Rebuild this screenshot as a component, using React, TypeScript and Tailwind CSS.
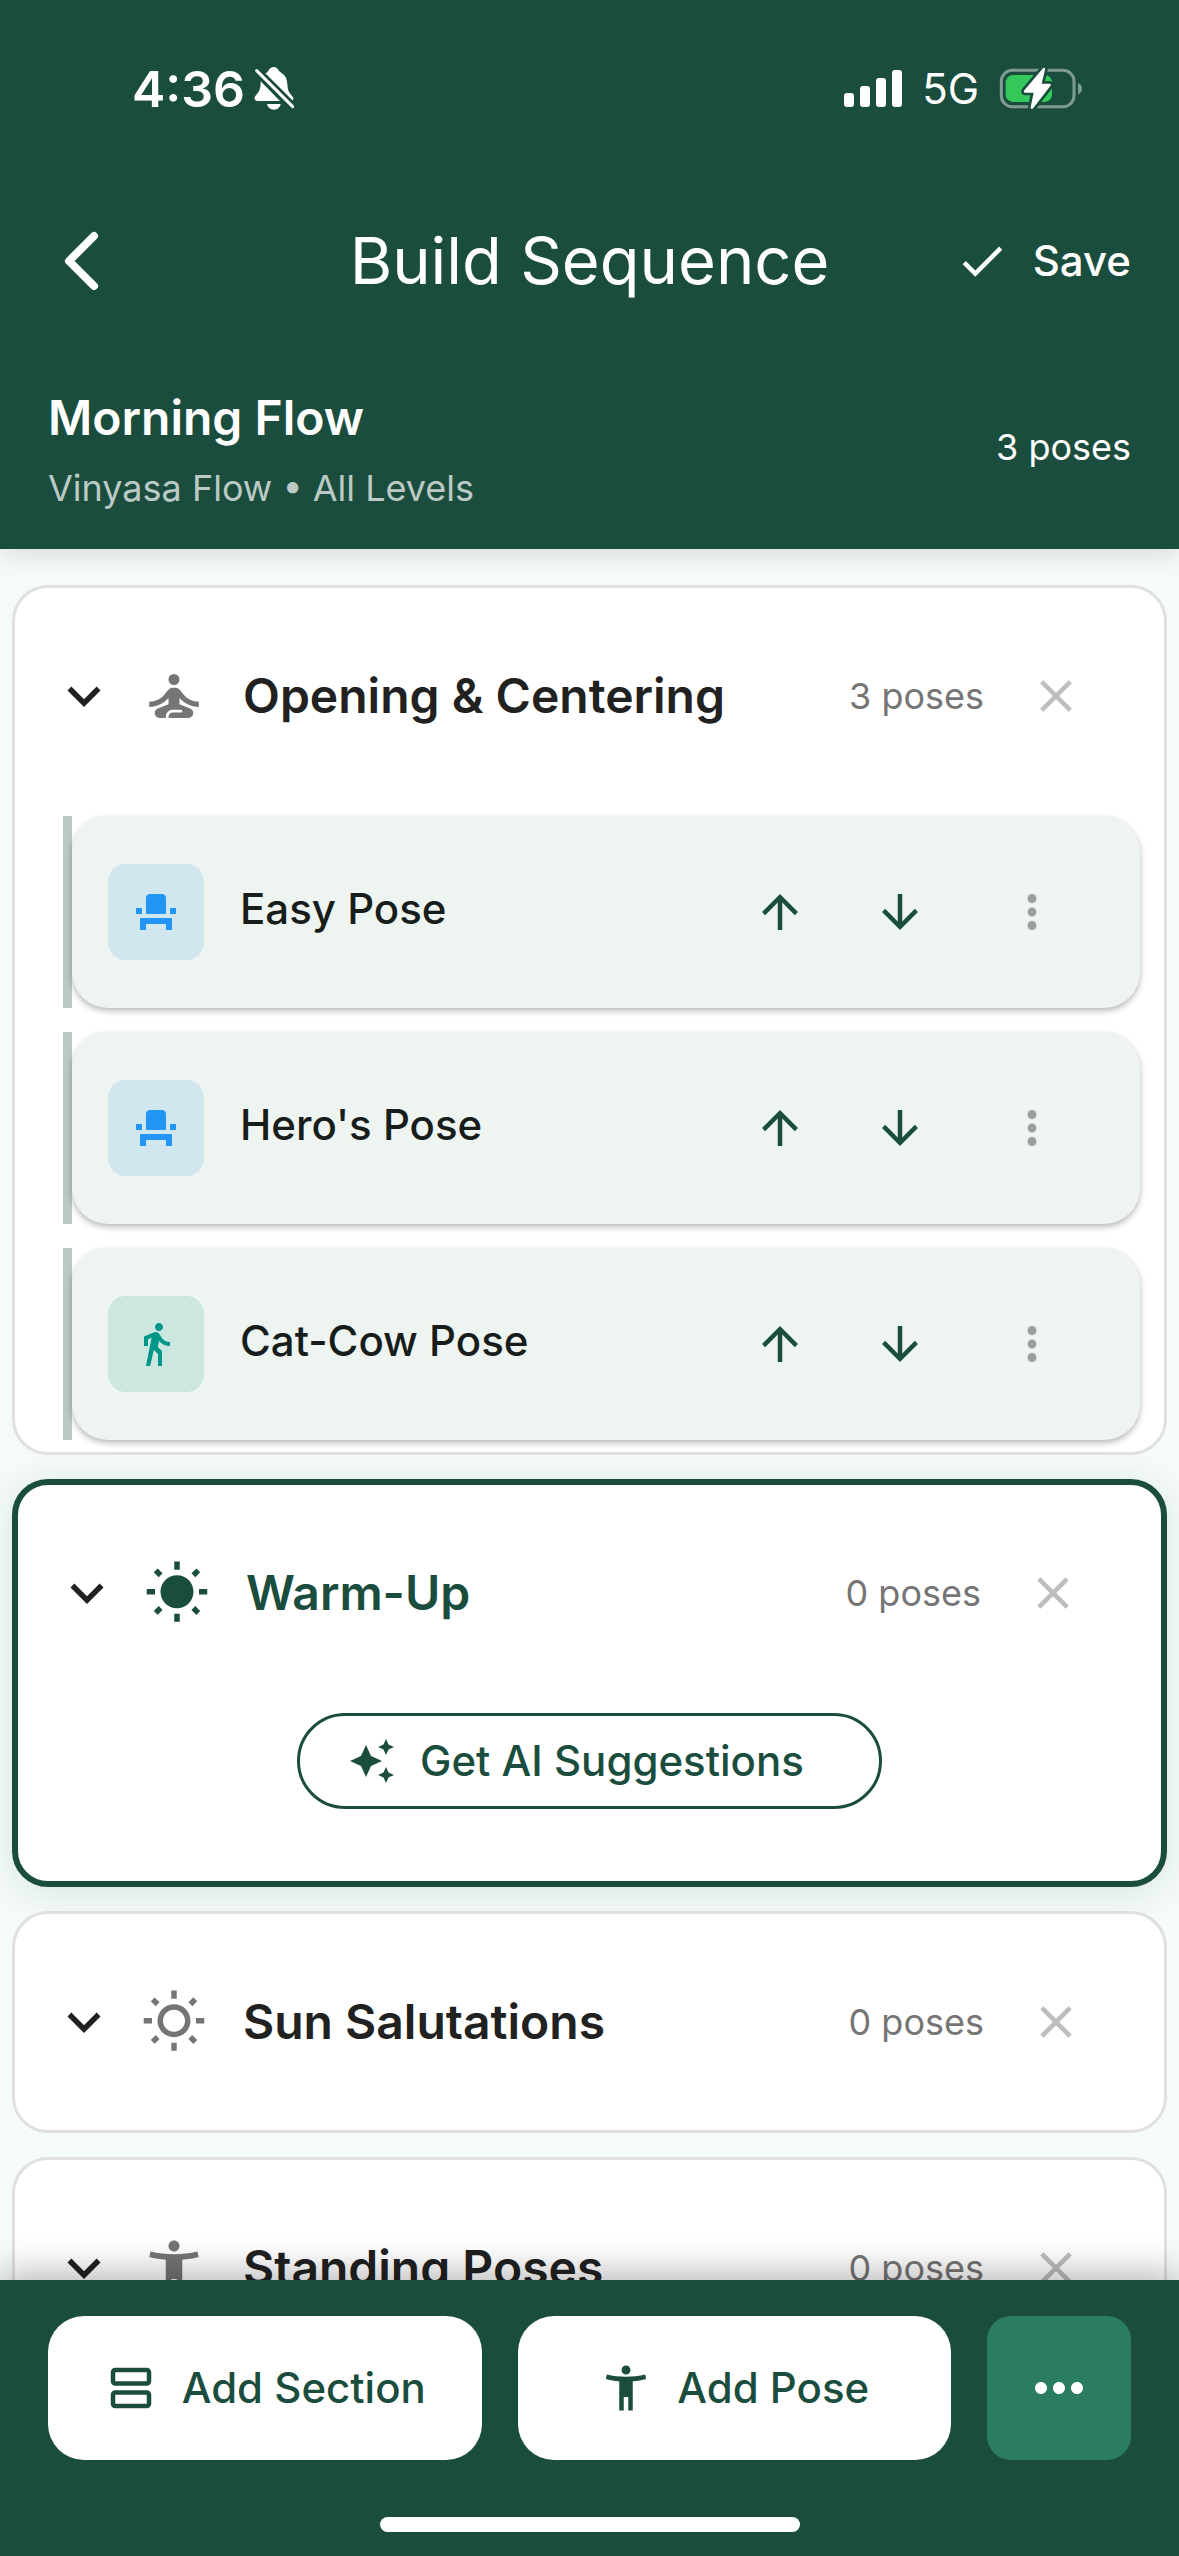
import type { ReactNode } from "react";
import { useState } from "react";
import type { IconType } from "react-icons";
import {
  MdAccessibilityNew,
  MdArrowDownward,
  MdArrowUpward,
  MdAutoAwesome,
  MdCheck,
  MdClose,
  MdDirectionsWalk,
  MdEventSeat,
  MdExpandMore,
  MdMoreHoriz,
  MdMoreVert,
  MdOutlineViewAgenda,
  MdOutlineWbSunny,
  MdSelfImprovement,
  MdWbSunny,
} from "react-icons/md";

type PoseKind = "seated" | "moving";

interface Pose {
  name: string;
  kind: PoseKind;
}

interface Section {
  id: string;
  title: string;
  icon: IconType;
  poses: Pose[];
}

const SECTIONS: Section[] = [
  {
    id: "opening",
    title: "Opening & Centering",
    icon: MdSelfImprovement,
    poses: [
      { name: "Easy Pose", kind: "seated" },
      { name: "Hero's Pose", kind: "seated" },
      { name: "Cat-Cow Pose", kind: "moving" },
    ],
  },
  { id: "warmup", title: "Warm-Up", icon: MdWbSunny, poses: [] },
  { id: "sun", title: "Sun Salutations", icon: MdOutlineWbSunny, poses: [] },
  { id: "standing", title: "Standing Poses", icon: MdAccessibilityNew, poses: [] },
];

function SilentBell() {
  return (
    <svg width="42" height="45" viewBox="0 0 126 135" aria-hidden="true">
      <path
        fill="#fff"
        d="M37 22c6-2 7-4 10-9 3-6 8-10 15-10s12 4 15 10c2 4 4 5 9 8 11 7 16 17 17 32 1 14 2 21 7 28l9 11c4 5 2 10-1 11zM23 46l58 59H15c-10 0-13-8-8-15l9-11c5-7 7-17 7-33zM42 114h41c-2 10-9 17-20 17s-19-7-21-17z"
      />
      <path d="M11 14 119 122" stroke="#1b4d3e" strokeWidth="20" />
      <path d="M11 14 119 122" stroke="#fff" strokeWidth="9" strokeLinecap="round" />
    </svg>
  );
}

function SignalBars() {
  return (
    <svg width="58" height="37" viewBox="0 0 174 111" fill="#fff" aria-hidden="true">
      <rect x="0" y="69" width="30" height="42" rx="9" />
      <rect x="48" y="48" width="30" height="63" rx="9" />
      <rect x="96" y="24" width="30" height="87" rx="9" />
      <rect x="144" y="0" width="30" height="111" rx="9" />
    </svg>
  );
}

function Battery() {
  return (
    <svg width="84" height="43" viewBox="0 0 252 129" aria-hidden="true">
      <rect x="7" y="10" width="218" height="109" rx="33" fill="none" stroke="#7f9b92" strokeWidth="9" />
      <path d="M237 48c16 6 16 28 0 34z" fill="#7f9b92" />
      <rect x="20" y="24" width="139" height="81" rx="22" fill="#34c759" />
      <path
        d="M132 4 76 70c-3 4-1 7 3 7h25L95 120c-1 6 4 8 8 3l51-66c3-4 1-7-3-7h-23l10-42c1-6-3-8-6-4z"
        fill="#fff"
        stroke="#1b4d3e"
        strokeWidth="16"
        strokeLinejoin="round"
        paintOrder="stroke"
      />
    </svg>
  );
}

function BackChevron() {
  return (
    <svg width="36" height="60" viewBox="0 0 36 60" fill="none" aria-hidden="true">
      <path d="M30 5 5 30l25 25" stroke="#fff" strokeWidth="8" strokeLinecap="round" strokeLinejoin="round" />
    </svg>
  );
}

function StatusBar() {
  return (
    <div className="flex h-[177px] items-center justify-between pr-24 pl-[132px]">
      <div className="flex items-center gap-2">
        <span className="text-[50px] leading-[60px] font-semibold">4:36</span>
        <SilentBell />
      </div>
      <div className="flex items-center gap-5">
        <SignalBars />
        <span className="text-[42px] leading-[60px]">5G</span>
        <Battery />
      </div>
    </div>
  );
}

function poseCount(n: number) {
  return `${n} poses`;
}

function Header({ total }: { total: number }) {
  return (
    <header className="relative z-10 shrink-0 bg-[#1b4d3e] text-white shadow-[0_6px_24px_rgba(0,0,0,0.12)]">
      <StatusBar />
      <div className="grid h-[168px] grid-cols-[1fr_auto_1fr] items-center px-12">
        <button type="button" aria-label="Back" className="justify-self-start px-4">
          <BackChevron />
        </button>
        <h1 className="text-[65px] leading-[84px] font-normal">Build Sequence</h1>
        <button type="button" className="flex items-center gap-6 justify-self-end text-[42px] leading-[60px] font-medium">
          <MdCheck size={54} />
          Save
        </button>
      </div>
      <div className="flex items-center justify-between px-12 py-[37px]">
        <div className="flex flex-col gap-2.5">
          <h2 className="text-[48px] leading-[72px] font-semibold">Morning Flow</h2>
          <p className="text-[36px] leading-[48px] text-[#bbcac5]">Vinyasa Flow • All Levels</p>
        </div>
        <span className="text-[36px] leading-[48px]">{poseCount(total)}</span>
      </div>
    </header>
  );
}

function PoseBadge({ kind }: { kind: PoseKind }) {
  return kind === "seated" ? (
    <span className="flex size-24 items-center justify-center rounded-[18px] bg-[#d1e7ef] text-[#2196f3]">
      <MdEventSeat size={48} />
    </span>
  ) : (
    <span className="flex size-24 items-center justify-center rounded-[18px] bg-[#cbe7df] text-[#009688]">
      <MdDirectionsWalk size={48} />
    </span>
  );
}

function IconButton({ label, wide, children }: { label: string; wide?: boolean; children: ReactNode }) {
  return (
    <button
      type="button"
      aria-label={label}
      className={wide ? "flex h-36 w-36 items-center justify-center" : "flex h-36 w-[120px] items-center justify-center"}
    >
      {children}
    </button>
  );
}

function PoseRow({ pose }: { pose: Pose }) {
  return (
    <li className="border-l-[9px] border-[#b9c9c4]">
      <div className="flex items-center rounded-[36px] bg-[#eef4f0] px-9 py-6 shadow-[0_3px_6px_rgba(0,0,0,0.28)]">
        <PoseBadge kind={pose.kind} />
        <span className="flex-1 pb-1.5 pl-9 text-[42px] leading-[60px] font-medium text-[#171d1b]">{pose.name}</span>
        <div className="flex items-center text-[#1b4d3e]">
          <IconButton label={`Move ${pose.name} up`}>
            <MdArrowUpward size={54} />
          </IconButton>
          <IconButton label={`Move ${pose.name} down`}>
            <MdArrowDownward size={54} />
          </IconButton>
        </div>
        <div className="text-[#9e9e9e]">
          <IconButton label={`${pose.name} options`} wide>
            <MdMoreVert size={54} />
          </IconButton>
        </div>
      </div>
    </li>
  );
}

function SectionCard({ section, active, onSelect }: { section: Section; active: boolean; onSelect: () => void }) {
  const Icon = section.icon;
  return (
    <section
      className={
        active
          ? "shrink-0 rounded-[36px] border-[6px] border-[#1b4d3e] bg-white shadow-[0_6px_36px_rgba(27,77,62,0.12)]"
          : "shrink-0 rounded-[36px] border-[3px] border-[#e0e0e0] bg-white"
      }
    >
      <div className="flex h-[216px] items-center px-9">
        <button type="button" onClick={onSelect} className="flex flex-1 items-center text-left">
          <MdExpandMore size={66} className="mr-6 text-[#212121]" />
          <Icon size={66} className={active ? "text-[#1b4d3e]" : "text-[#757575]"} />
          <span
            className={
              active
                ? "pl-9 text-[48px] leading-[72px] font-semibold text-[#1b4d3e]"
                : "pl-9 text-[48px] leading-[72px] font-semibold text-[#212121]"
            }
          >
            {section.title}
          </span>
        </button>
        <span className="text-[36px] leading-[48px] text-[#757575]">{poseCount(section.poses.length)}</span>
        <div className="text-[#bdbdbd]">
          <IconButton label={`Remove ${section.title}`} wide>
            <MdClose size={54} />
          </IconButton>
        </div>
      </div>

      {section.poses.length > 0 ? (
        <ul className="flex flex-col gap-6 pt-3 pr-6 pb-3 pl-12">
          {section.poses.map((pose) => (
            <PoseRow key={pose.name} pose={pose} />
          ))}
        </ul>
      ) : null}

      {active ? (
        <div className="flex justify-center pt-3 pb-[72px]">
          <button
            type="button"
            className="flex h-24 min-w-[585px] items-center gap-6 rounded-full border-[3px] border-[#1b4d3e] px-12 text-[42px] leading-[60px] font-medium text-[#1b4d3e]"
          >
            <MdAutoAwesome size={48} />
            Get AI Suggestions
          </button>
        </div>
      ) : null}
    </section>
  );
}

function BottomBar() {
  return (
    <footer className="relative z-10 shrink-0 bg-[#1b4d3e] pb-6 shadow-[0_-6px_36px_rgba(0,0,0,0.3)]">
      <div className="flex gap-9 px-12 pt-9">
        <button
          type="button"
          className="flex h-36 flex-1 items-center justify-center gap-6 rounded-[36px] bg-white text-[42px] leading-[60px] font-medium text-[#1b4d3e]"
        >
          <MdOutlineViewAgenda size={54} />
          Add Section
        </button>
        <button
          type="button"
          className="flex h-36 flex-1 items-center justify-center gap-6 rounded-[36px] bg-white text-[42px] leading-[60px] font-medium text-[#1b4d3e]"
        >
          <MdAccessibilityNew size={54} />
          Add Pose
        </button>
        <button
          type="button"
          aria-label="More actions"
          className="flex size-36 items-center justify-center rounded-[24px] bg-[#2a7d5f] text-white"
        >
          <MdMoreHoriz size={72} />
        </button>
      </div>
      <div className="mx-auto mt-[57px] h-[15px] w-[420px] rounded-full bg-white" />
    </footer>
  );
}

export default function App() {
  const [activeId, setActiveId] = useState("warmup");
  const total = SECTIONS.reduce((sum, s) => sum + s.poses.length, 0);

  return (
    <div className="flex h-screen flex-col bg-[#f5fbf7] font-['Inter',sans-serif]">
      <Header total={total} />
      <main className="flex min-h-0 flex-1 flex-col gap-6 overflow-hidden px-3 pt-9">
        {SECTIONS.map((section) => (
          <SectionCard
            key={section.id}
            section={section}
            active={section.id === activeId}
            onSelect={() => setActiveId(section.id)}
          />
        ))}
      </main>
      <BottomBar />
    </div>
  );
}
